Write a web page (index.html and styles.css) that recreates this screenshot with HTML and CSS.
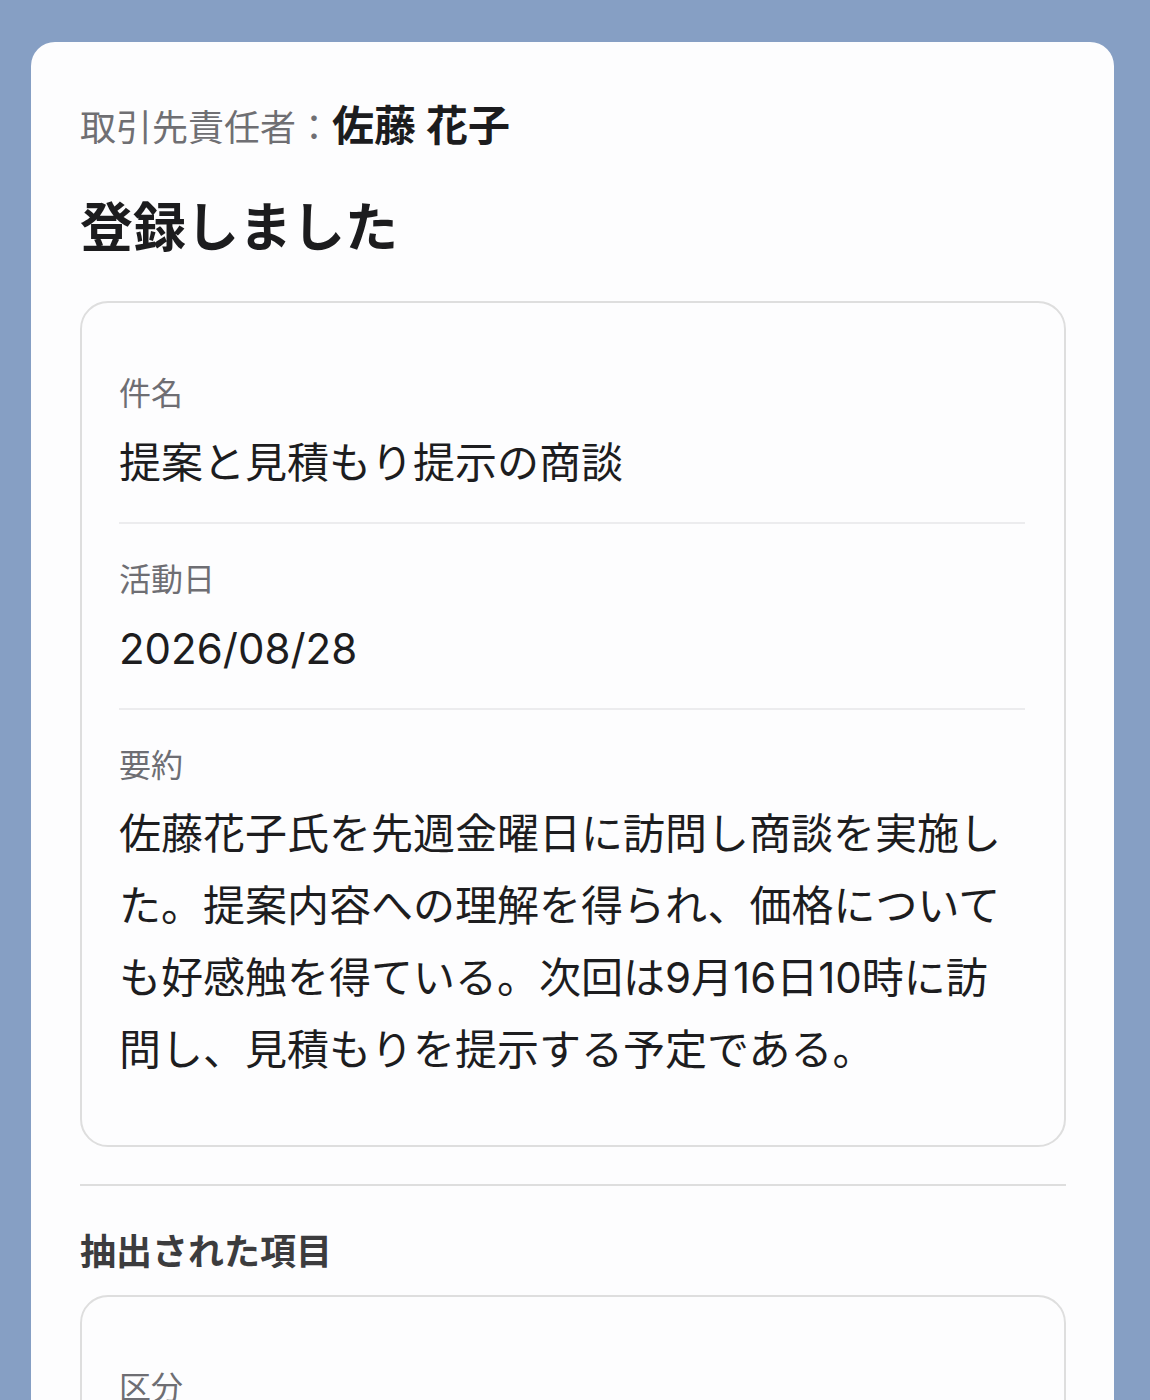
FILE: index.html
```html
<!DOCTYPE html>
<html lang="ja">
<head>
<meta charset="utf-8">
<title>登録しました</title>
<link rel="stylesheet" href="styles.css">
</head>
<body>
<main class="sheet">
  <p class="contact"><span class="contact-label">取引先責任者：</span><span class="contact-name">佐藤 花子</span></p>
  <h1 class="title">登録しました</h1>

  <section class="card">
    <div class="field">
      <div class="field-label">件名</div>
      <div class="field-value">提案と見積もり提示の商談</div>
    </div>
    <div class="field">
      <div class="field-label">活動日</div>
      <div class="field-value">2026/08/28</div>
    </div>
    <div class="field field-last">
      <div class="field-label">要約</div>
      <div class="field-value field-para">佐藤花子氏を先週金曜日に訪問し商談を実施した。提案内容への理解を得られ、価格についても好感触を得ている。次回は9月16日10時に訪問し、見積もりを提示する予定である。</div>
    </div>
  </section>

  <hr class="divider">

  <h2 class="section-title">抽出された項目</h2>

  <section class="card">
    <div class="field">
      <div class="field-label">区分</div>
      <div class="field-value">訪問</div>
    </div>
  </section>
</main>
</body>
</html>
```

FILE: styles.css
```css
html, body {
  margin: 0;
  padding: 0;
}

body {
  background: #869fc4;
  font-family: Inter, "Noto Sans CJK JP", "Noto Sans", sans-serif;
  color: #1d1d1f;
  overflow: hidden;
  height: 1400px;
}

.sheet {
  margin: 42px 36px 0 31px;
  background: #fdfdfe;
  border-radius: 24px 24px 0 0;
  padding: 60px 48px 40px 49px;
  min-height: 1400px;
  box-sizing: border-box;
}

.contact {
  margin: 0;
  font-size: 36px;
  line-height: 48px;
}

.contact-label {
  color: #6f6f73;
}

.contact-name {
  font-size: 42px;
  font-weight: 700;
  color: #1c1c1e;
}

.title {
  margin: 44px 0 0;
  font-size: 53px;
  line-height: 64px;
  font-weight: 700;
  color: #1c1c1e;
}

.card {
  margin-top: 41px;
  border: 2px solid #dedede;
  border-radius: 28px;
  background: #fdfdfe;
  padding: 36px 39px 28px 37px;
}

.field {
  padding: 34px 0 31px;
  border-bottom: 2px solid #ececee;
}

.field:first-child {
  padding-top: 33px;
}

.field-last {
  border-bottom: none;
}

.field-label {
  font-size: 32px;
  line-height: 44px;
  color: #6e6e73;
}

.field-value {
  margin-top: 19px;
  font-size: 42px;
  line-height: 56px;
  color: #1d1d1f;
}

.field-para {
  margin-top: 10px;
  line-height: 72px;
}

.divider {
  margin: 37px 0 0;
  border: none;
  border-top: 2px solid #dedede;
  height: 0;
}

.section-title {
  margin: 42px 0 0;
  font-size: 36px;
  line-height: 48px;
  font-weight: 700;
  color: #3c3c3e;
}

.section-title + .card {
  margin-top: 19px;
}
```
